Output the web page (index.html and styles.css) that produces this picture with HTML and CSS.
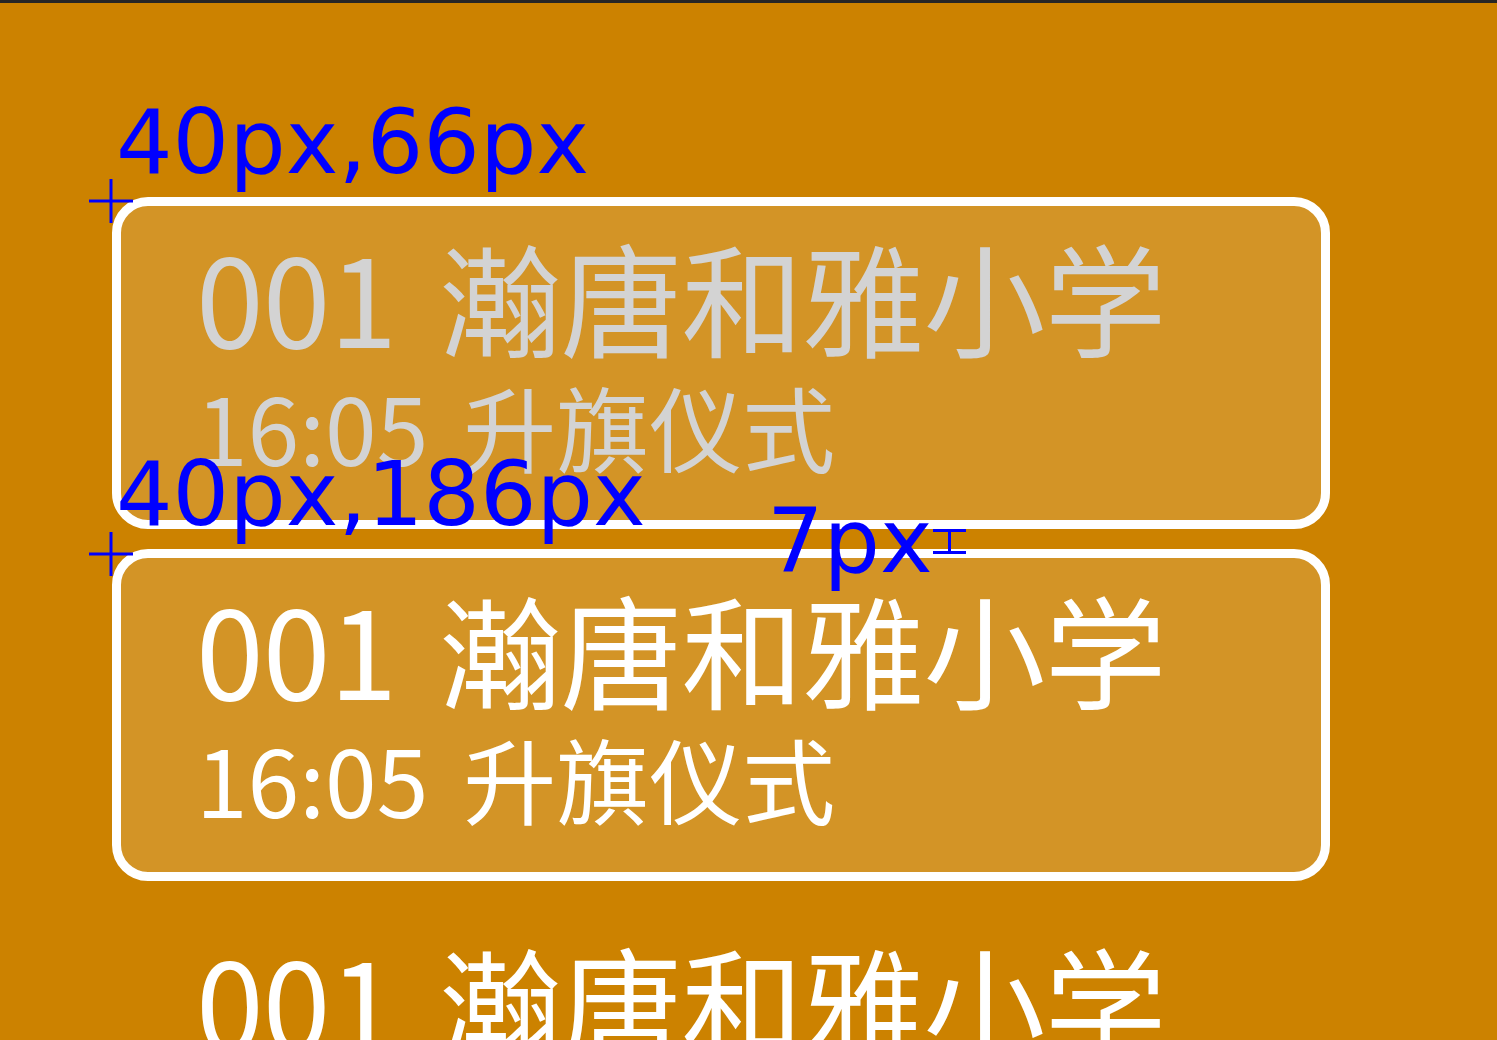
FILE: index.html
```html
<!DOCTYPE html>
<html lang="zh-CN">
<head>
<meta charset="utf-8">
<title>日程</title>
<link rel="stylesheet" href="styles.css">
</head>
<body>
<div class="topbar"></div>
<main class="stage">
  <ul class="schedule">
    <li class="item item--card item--disabled">
      <div class="item-title">001 瀚唐和雅小学</div>
      <div class="item-sub">16:05 升旗仪式</div>
    </li>
    <li class="item item--card">
      <div class="item-title">001 瀚唐和雅小学</div>
      <div class="item-sub">16:05 升旗仪式</div>
    </li>
    <li class="item">
      <div class="item-title">001 瀚唐和雅小学</div>
      <div class="item-sub">16:05 升旗仪式</div>
    </li>
  </ul>

  <div class="anno anno-label anno-1">40px,66px</div>
  <svg class="anno cross cross-1" width="44" height="44" viewBox="0 0 44 44"><path d="M22 0V44M0 22H44" stroke="#0000ff" stroke-width="3"/></svg>
  <div class="anno anno-label anno-2">40px,186px</div>
  <svg class="anno cross cross-2" width="44" height="44" viewBox="0 0 44 44"><path d="M22 0V44M0 22H44" stroke="#0000ff" stroke-width="3"/></svg>
  <div class="anno anno-label anno-3">7px</div>
  <svg class="anno ibeam" width="33" height="25" viewBox="0 0 33 25"><path d="M0 1.5H33M16.5 1.5V23.5M0 23.5H33" stroke="#0000ff" stroke-width="3"/></svg>
</main>
</body>
</html>
```

FILE: styles.css
```css
html, body {
  margin: 0;
  padding: 0;
}

body {
  background: #cc8200;
  width: 1497px;
  height: 1040px;
  overflow: hidden;
  font-family: "Noto Sans CJK SC", "Noto Sans", sans-serif;
}

.topbar {
  height: 3px;
  background: #262626;
}

.stage {
  position: relative;
  padding: 194px 0 0 112px;
}

.schedule {
  list-style: none;
  margin: 0;
  padding: 0;
  display: flex;
  flex-direction: column;
  gap: 20px;
  width: 1218px;
}

.item {
  box-sizing: border-box;
  height: 332px;
  border: 9px solid transparent;
  border-radius: 36px;
  padding: 24px 0 0 75px;
  color: #ffffff;
}

.item--card {
  border-color: #ffffff;
  background: rgba(255, 255, 255, 0.15);
}

.item--disabled {
  color: #d3d3d3;
}

.item-title {
  font-size: 122px;
  line-height: 130px;
  letter-spacing: -1px;
  word-spacing: 17px;
  white-space: nowrap;
}

.item-sub {
  margin-top: 16px;
  font-size: 93px;
  line-height: 100px;
  word-spacing: 14px;
  white-space: nowrap;
}

.anno {
  position: absolute;
}

.anno-label {
  font-family: "DejaVu Sans", sans-serif;
  font-size: 89px;
  line-height: normal;
  color: #0000ff;
  white-space: nowrap;
}

.anno-1 { left: 116px; top: 87px; }
.anno-2 { left: 116px; top: 439px; }
.anno-3 { left: 767px; top: 486px; }

.cross-1 { left: 89px; top: 176px; }
.cross-2 { left: 89px; top: 529px; }

.ibeam { left: 933px; top: 526px; }
```
